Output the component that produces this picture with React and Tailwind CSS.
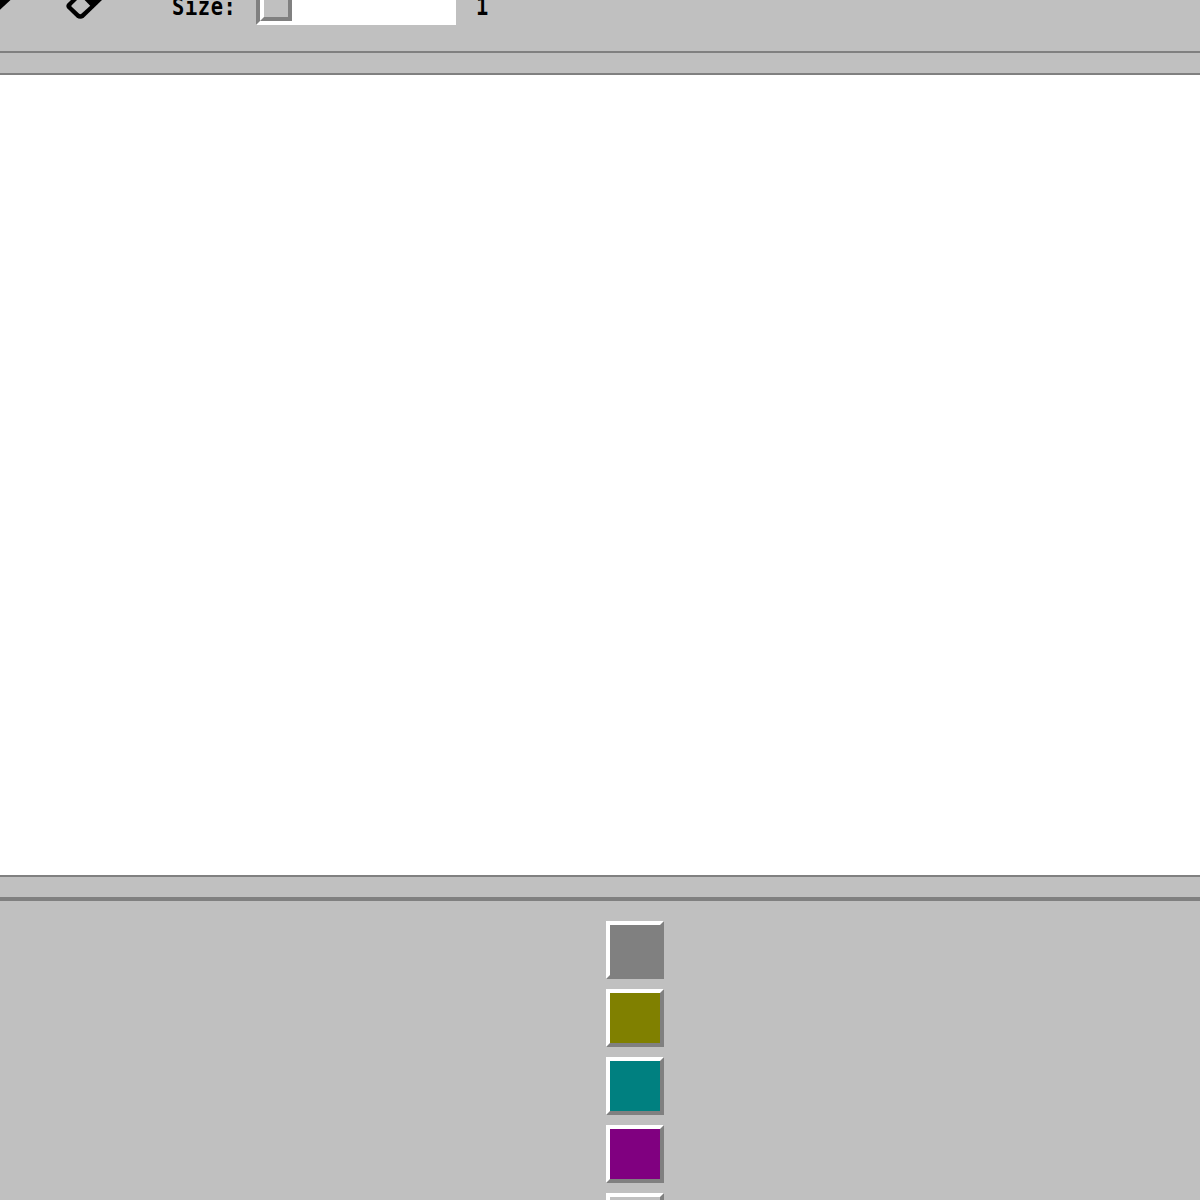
import { useState } from "react";

const colors = ["#808080", "#808000", "#008080", "#800080", "#c0c0c0"];

const PencilIcon = () => (
  <svg width="12" height="24" viewBox="0 0 12 24">
    <path d="M0 0H10.5L0 9.7Z" fill="#000" />
  </svg>
);

const EraserIcon = () => (
  <svg width="40" height="24" viewBox="0 0 40 24">
    <path
      d="M7 0L3.4 3.6Q1.2 6 3.4 8.6L12.4 17.2Q16.3 20.2 20.2 17.2L38 0Z"
      fill="#000"
    />
    <path
      d="M13 0L7.7 5.2Q6.9 6 7.7 6.8L15.2 13.7Q16.3 14.6 17.4 13.7L26.2 5.8L20.6 0Z"
      fill="#c0c0c0"
    />
  </svg>
);

const Label = ({ children }) => (
  <span className="inline-block origin-left scale-x-[0.85] font-['DejaVu_Sans_Mono',monospace] text-[24px] leading-[26px] font-bold tracking-[0.7px]">
    {children}
  </span>
);

const Toolbar = ({ size }) => (
  <div className="flex h-[53px] shrink-0 items-start border-b-2 border-[#808080]">
    <div className="w-16">
      <PencilIcon />
    </div>
    <div className="w-[108px]">
      <EraserIcon />
    </div>
    <div className="-mt-1.5 w-[84px]">
      <Label>Size:</Label>
    </div>
    <div className="-mt-[11px] h-9 w-[200px] border-4 border-t-[#808080] border-r-white border-b-white border-l-[#808080] bg-white">
      <div className="h-7 w-8 border-4 border-t-white border-r-[#808080] border-b-[#808080] border-l-white bg-[#c0c0c0]" />
    </div>
    <div className="-mt-1.5 ml-5">
      <Label>{size}</Label>
    </div>
  </div>
);

const Palette = ({ onSelect }) => (
  <div className="flex min-h-0 flex-1 flex-col gap-2.5 border-t-4 border-[#808080] pt-5 pl-[606px]">
    {colors.map((color) => (
      <button
        key={color}
        type="button"
        aria-label={color}
        onClick={() => onSelect(color)}
        className="size-[58px] shrink-0 border-4 border-t-white border-r-[#808080] border-b-[#808080] border-l-white"
        style={{ backgroundColor: color }}
      />
    ))}
  </div>
);

export default function App() {
  const [, setColor] = useState("#000000");

  return (
    <div className="flex h-[1200px] w-[1200px] flex-col overflow-hidden bg-[#c0c0c0] text-black">
      <Toolbar size={1} />
      <div className="shrink-0 py-5">
        <div className="h-[804px] border-y-2 border-[#808080] bg-white" />
      </div>
      <Palette onSelect={setColor} />
    </div>
  );
}
